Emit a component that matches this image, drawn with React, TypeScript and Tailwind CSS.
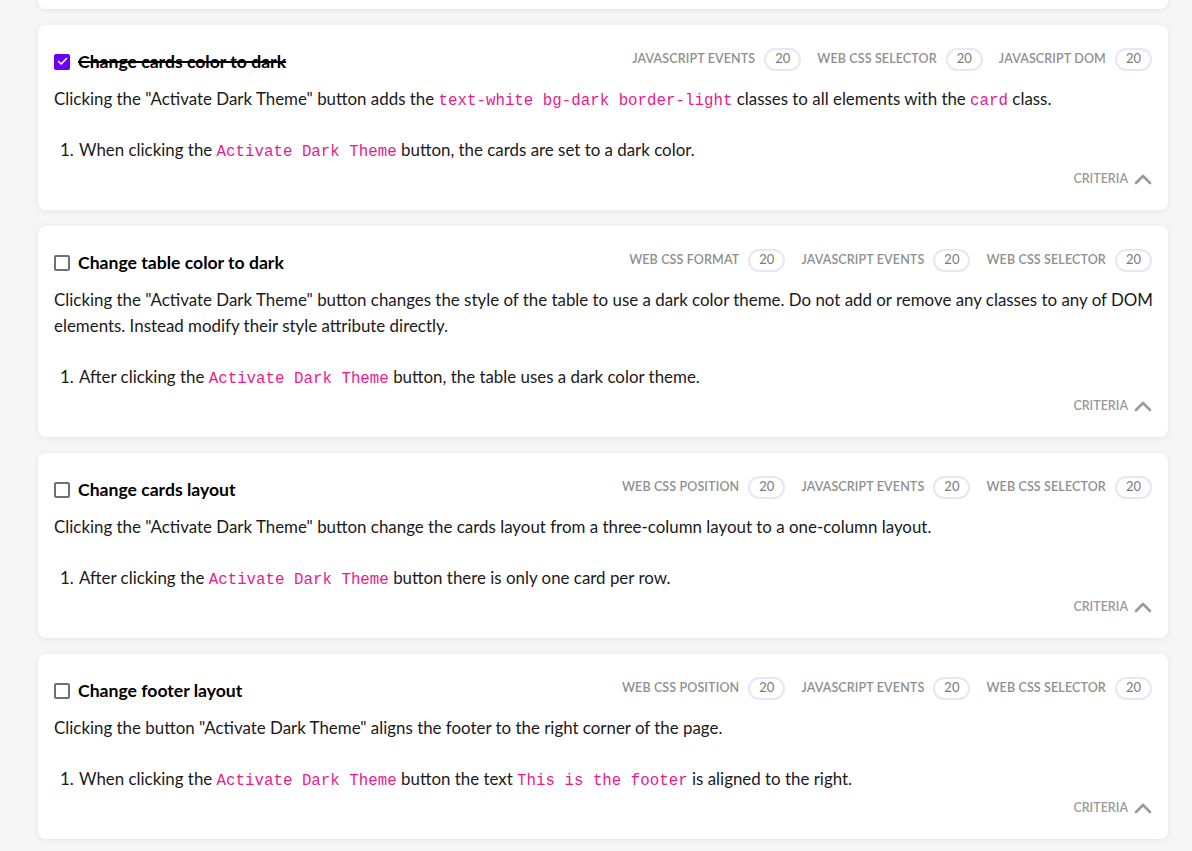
import React from "react";

const C = ({ children }: { children: React.ReactNode }) => (
  <code className="text-[#ea1a8b] text-[15.8px] leading-none [font-family:'Liberation_Mono',monospace]">{children}</code>
);

const Tag = ({ label }: { label: string }) => (
  <div className="flex items-center gap-[9px]">
    <span className="text-[12.5px] font-semibold uppercase text-[#8f8f8f] tracking-[0.01em]">{label}</span>
    <span className="h-[23px] px-[9px] flex items-center rounded-full border-2 border-[#e6e6f4] text-[13px] text-[#7a7a7a]">20</span>
  </div>
);

const Chevron = () => (
  <svg width="18" height="12" viewBox="0 0 18 12" fill="none">
    <path d="M2 10 L9 3 L16 10" stroke="#9a9a9a" strokeWidth="2.6" strokeLinecap="round" strokeLinejoin="round" />
  </svg>
);

type Card = {
  title: string;
  done?: boolean;
  tags: string[];
  desc: React.ReactNode;
  item: React.ReactNode;
};

const cards: Card[] = [
  {
    title: "Change cards color to dark",
    done: true,
    tags: ["JavaScript Events", "Web CSS Selector", "JavaScript DOM"],
    desc: (
      <>
        Clicking the "Activate Dark Theme" button adds the <C>text-white bg-dark border-light</C> classes to all elements with the <C>card</C> class.
      </>
    ),
    item: (
      <>
        When clicking the <C>Activate Dark Theme</C> button, the cards are set to a dark color.
      </>
    ),
  },
  {
    title: "Change table color to dark",
    tags: ["Web CSS Format", "JavaScript Events", "Web CSS Selector"],
    desc: (
      <>
        Clicking the "Activate Dark Theme" button changes the style of the table to use a dark color theme. Do not add or remove any classes to any of DOM
        <br />
        elements. Instead modify their style attribute directly.
      </>
    ),
    item: (
      <>
        After clicking the <C>Activate Dark Theme</C> button, the table uses a dark color theme.
      </>
    ),
  },
  {
    title: "Change cards layout",
    tags: ["Web CSS Position", "JavaScript Events", "Web CSS Selector"],
    desc: (
      <>
        Clicking the "Activate Dark Theme" button change the cards layout from a three-column layout to a one-column layout.
      </>
    ),
    item: (
      <>
        After clicking the <C>Activate Dark Theme</C> button there is only one card per row.
      </>
    ),
  },
  {
    title: "Change footer layout",
    tags: ["Web CSS Position", "JavaScript Events", "Web CSS Selector"],
    desc: (
      <>
        Clicking the button "Activate Dark Theme" aligns the footer to the right corner of the page.
      </>
    ),
    item: (
      <>
        When clicking the <C>Activate Dark Theme</C> button the text <C>This is the footer</C> is aligned to the right.
      </>
    ),
  },
];

export default function App() {
  return (
    <div className="min-h-[851px] w-[1192px] bg-[#f6f6f6] overflow-hidden [font-family:Lato,'Noto_Sans',sans-serif] text-[#1a1a1a]">
      <div className="ml-[38px] mr-[24px] flex flex-col gap-4">
        <div className="h-[100px] mt-[-91px] bg-white rounded-lg shadow-[0_1px_6px_rgba(0,0,0,0.08)]" />
        {cards.map((c, i) => (
          <div key={i} className="bg-white rounded-lg shadow-[0_1px_6px_rgba(0,0,0,0.08)] px-4 pt-[22px] pb-[21px]">
            <div className="flex items-center justify-between h-[30px]">
              <div className="flex items-center gap-[8px]">
                {c.done ? (
                  <span className="w-4 h-4 rounded-[2px] bg-[#6a00f4] flex items-center justify-center">
                    <svg width="11" height="9" viewBox="0 0 11 9" fill="none">
                      <path d="M1.5 4.5 L4.2 7 L9.5 1.5" stroke="white" strokeWidth="1.6" strokeLinecap="round" strokeLinejoin="round" />
                    </svg>
                  </span>
                ) : (
                  <span className="w-4 h-4 rounded-[2px] border-2 border-[#707070] bg-white" />
                )}
                <span className={"text-[17.6px] font-bold text-black " + (c.done ? "line-through decoration-2" : "")}>{c.title}</span>
              </div>
              <div className="flex items-center gap-[16px] pt-[2px] -mt-[8px]">
                {c.tags.map((t) => (
                  <Tag key={t} label={t} />
                ))}
              </div>
            </div>
            <p className="mt-[9px] text-[16.9px] leading-[26px] whitespace-nowrap">{c.desc}</p>
            <ol className="list-decimal pl-[24px] mt-[25px] text-[16.9px] leading-[26px]">
              <li className="pl-[1px]">{c.item}</li>
            </ol>
            <div className="flex justify-end items-center gap-[6px] mt-[6px] h-[20px]">
              <span className="text-[12.5px] font-semibold text-[#9a9a9a] uppercase">Criteria</span>
              <Chevron />
            </div>
          </div>
        ))}
      </div>
    </div>
  );
}
